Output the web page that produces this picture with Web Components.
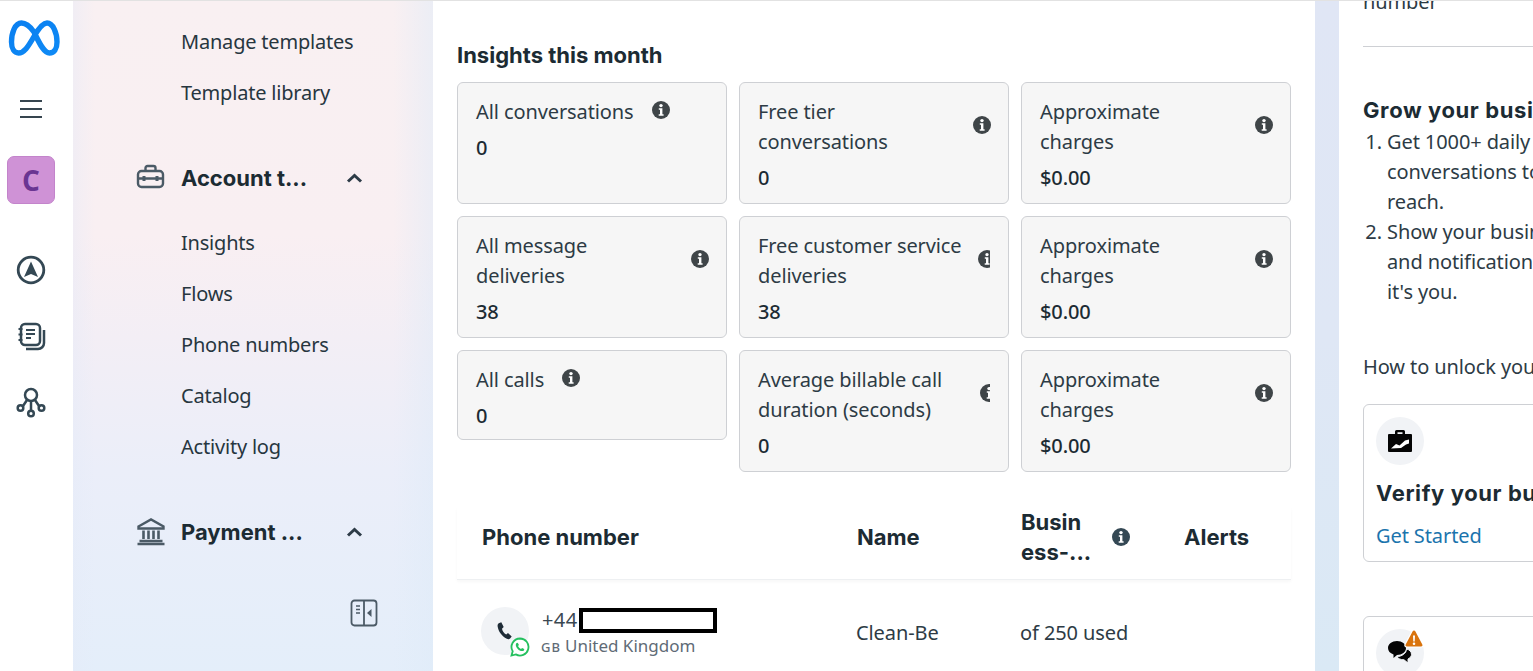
<!DOCTYPE html>
<html lang="en">
<head>
<meta charset="utf-8">
<title>WhatsApp Manager</title>
<style>
  html, body { margin: 0; height: 671px; overflow: hidden; background: #fff; }
  body { font-family: "Noto Sans", "Liberation Sans", sans-serif; color: #1c2b33; letter-spacing: -.1px; }
</style>
</head>
<body>
<app-shell>
  <left-rail slot="rail"></left-rail>
  <side-nav slot="nav"></side-nav>
  <main-panel slot="main"></main-panel>
  <right-panel slot="side"></right-panel>
</app-shell>

<script>
// small helper so each component just declares its css + markup
function shadow(el, css, html) {
  el.attachShadow({ mode: 'open' }).innerHTML = `<style>${css}</style>${html}`;
}

const HEAD_FONT = 'Inter, "Noto Sans", sans-serif';
const ICONS = {
  toolbox: '<rect x="2" y="8" width="25" height="16" rx="3.500"/><path d="M9.500 8V5A2 2 0 0 1 11.500 3h6a2 2 0 0 1 2 2V8M2 15.500h25"/><path d="M8 13v5M21 13v5" stroke-width="3"/>',
  bank: '<path d="M2.500 9.500 15 2.500l12.500 7v2h-25z"/><path d="M3.500 24h23M1.500 27h27M7.500 13.500v8.500M12.500 13.500v8.500M17.500 13.500v8.500M22.500 13.500v8.500" stroke-width="2.600"/>',
  chevron: '<path d="M2 9.500 8.500 3.500 15 9.500" fill="none" stroke="#2d3b47" stroke-width="3"/>'
};

class AppShell extends HTMLElement {
  constructor() {
    super();
    shadow(this, `
      :host { display: flex; height: 671px; box-sizing: border-box; border-top: 1px solid #e2e2e2; overflow: hidden;
        background:
          linear-gradient(180deg, #e0e6f5 0%, #dfe7f5 50%, #dae9f5 100%) right top / 218px 100% no-repeat,
          linear-gradient(180deg, #f9f0f2 0%, #f9eff2 35%, #f3eef5 50%, #ebeef9 70%, #e4eefa 100%); }
      ::slotted([slot=rail]) { flex: 0 0 73px; }
      ::slotted([slot=nav]) { flex: 0 0 360px; }
      ::slotted([slot=main]) { flex: 0 0 882px; }
      ::slotted([slot=side]) { flex: 0 0 194px; margin-left: 24px; }
    `, `<slot name="rail"></slot><slot name="nav"></slot><slot name="main"></slot><slot name="side"></slot>`);
  }
}

class LeftRail extends HTMLElement {
  constructor() {
    super();
    shadow(this, `
      :host { display: flex; flex-direction: column; background: #fff; padding: 19px 0 0 7px; box-sizing: border-box; }
      .logo { width: 52px; height: 36px; margin-left: 1px; }
      .burger { width: 24px; height: 20px; margin: 43px 0 0 12px; }
      .avatar { width: 48px; height: 48px; margin-top: 37px; box-sizing: border-box; border-radius: 7px; background: #cf92d6; border: 1px solid #c384cb;
        display: flex; align-items: center; justify-content: center; color: #6a3592; font: 700 28px "Open Sans", sans-serif; letter-spacing: 0; }
      .tools { display: flex; flex-direction: column; gap: 30px; margin-top: 48px; }
      .tools svg { display: block; width: 36px; height: 36px; margin-left: 6px; fill: none; stroke: #344854; stroke-width: 2.500; }
    `, `
      <svg class="logo" viewBox="0 0 52 36">
        <defs><linearGradient id="m" x1="0" y1="0" x2="1" y2="1"><stop offset="0" stop-color="#0a7ff0"/><stop offset="1" stop-color="#0f8af5"/></linearGradient></defs>
        <path d="M26 12C21 5 17 3 13.500 3 7 3 3.500 13 3.500 22 3.500 29 6.500 33 10.500 33 16 33 20 27 26 16.500 32 6 35.500 3 39 3 45 3 49 13 49 22 49 29 46 33 41.500 33 36.500 33 32.500 26 26 12Z" fill="none" stroke="url(#m)" stroke-width="5.400"/>
      </svg>
      <svg class="burger" viewBox="0 0 24 20"><path d="M1 2h22M1 10h22M1 18h22" stroke="#36454f" stroke-width="2.200"/></svg>
      <div class="avatar">C</div>
      <div class="tools">
        <svg viewBox="0 0 36 36"><circle cx="18" cy="18" r="12.800" stroke-width="2.800"/><path d="M18 9.500 25 25 18 22 11 25Z" fill="#344854" stroke="none"/></svg>
        <svg viewBox="0 0 36 36"><rect x="8" y="6" width="19" height="21" rx="4"/><path d="M31 12v13a6 6 0 0 1-6 6H13"/><path d="M13 12h9M13 16h9M13 20h5" stroke-width="2"/><path d="M5.500 11h4M5.500 16.500h4M5.500 22h4" stroke-width="1.900"/></svg>
        <svg viewBox="0 0 36 36"><circle cx="18" cy="11" r="6"/><circle cx="7.500" cy="24" r="2.800"/><circle cx="18" cy="29.500" r="2.800"/><circle cx="28.500" cy="24" r="2.800"/><path d="M18 17v9.500M14 16 10 22M22 16l4 6"/></svg>
      </div>
    `);
  }
}

class NavSection extends HTMLElement {
  constructor() {
    super();
    const icon = ICONS[this.getAttribute('icon')];
    shadow(this, `
      :host { display: block; margin-top: 34px; }
      .head { display: flex; align-items: center; height: 51px; padding-left: 63px; }
      .ic { width: 30px; height: 30px; flex: none; fill: none; stroke: #4b5a66; stroke-width: 2.400; }
      .label { width: 130px; margin-left: 15px; font: 700 22px ${HEAD_FONT}; letter-spacing: 0; white-space: nowrap; color: #1c2b33; }
      .chev { width: 17px; height: 12px; margin-left: 35px; }
      .items { margin-top: 14px; }
    `, `
      <div class="head">
        <svg class="ic" viewBox="0 0 30 30">${icon}</svg>
        <span class="label">${this.getAttribute('label')}</span>
        <svg class="chev" viewBox="0 0 17 12">${ICONS.chevron}</svg>
      </div>
      <div class="items"><slot></slot></div>
    `);
  }
}

class NavItem extends HTMLElement {
  constructor() {
    super();
    shadow(this, `
      :host { display: flex; align-items: center; height: 51px; padding-left: 108px; font-size: 20px; letter-spacing: -.2px; color: #27363f; }
    `, `<slot></slot>`);
  }
}

class SideNav extends HTMLElement {
  constructor() {
    super();
    shadow(this, `
      :host { display: flex; flex-direction: column; box-sizing: border-box; height: 670px; padding-top: 15px;
        background: linear-gradient(90deg, rgba(228,234,248,.4), rgba(228,234,248,0) 22px, rgba(222,235,248,0) 320px, rgba(222,235,248,.5)); }
      .collapse { width: 28px; height: 28px; margin: 28px 0 0 277px; fill: none; stroke: #4b5a66; stroke-width: 1.800; }
    `, `
      <nav-item>Manage templates</nav-item>
      <nav-item>Template library</nav-item>
      <nav-section icon="toolbox" label="Account t...">
        <nav-item>Insights</nav-item>
        <nav-item>Flows</nav-item>
        <nav-item>Phone numbers</nav-item>
        <nav-item>Catalog</nav-item>
        <nav-item>Activity log</nav-item>
      </nav-section>
      <nav-section icon="bank" label="Payment ..."></nav-section>
      <svg class="collapse" viewBox="0 0 28 28">
        <rect x="1.500" y="1.500" width="25" height="25" rx="3"/><path d="M14 1.500v25"/><path d="M6 7h4M6 10.500h4M6 14h4" stroke-width="1.500"/><path d="M21.500 10v8l-4.500-4z" fill="#4b5a66" stroke="none"/>
      </svg>
    `);
  }
}

class InfoIcon extends HTMLElement {
  constructor() {
    super();
    const clip = this.getAttribute('clip');
    shadow(this, `
      :host { display: block; flex: none; width: ${clip ? clip + 'px' : '18px'}; height: 18px; overflow: hidden; }
      svg { display: block; width: 18px; height: 18px; }
    `, `<svg viewBox="0 0 18 18"><circle cx="9" cy="9" r="9" fill="${this.getAttribute('color') || '#3f4548'}"/><circle cx="9" cy="4.600" r="1.700" fill="#fff"/><path d="M6.800 7.300h3.600v6h1.200v1.500H6.700v-1.500h1.300V8.800H6.800z" fill="#fff"/></svg>`);
  }
}

class InsightCard extends HTMLElement {
  constructor() {
    super();
    const clip = this.getAttribute('clip');
    const info = clip ? `<info-icon clip="${clip}"></info-icon>` : '<info-icon></info-icon>';
    shadow(this, `
      :host { display: block; box-sizing: border-box; border: 1px solid #ced0d4; border-radius: 6px; background: #f6f6f6; padding: 14px 17px 8px 18px; color: #2d3b45; font-size: 20px; line-height: 30px; }
      :host([tall]) { align-self: stretch; }
      :host([clip]) { padding-right: 18px; }
      .top { display: flex; align-items: center; gap: 18px; justify-content: space-between; }
      :host([short]) .top { justify-content: flex-start; }
      :host([clip]) .top { gap: 12px; }
      .top info-icon { margin-bottom: 4px; }
      .value { margin-top: 6px; font-weight: 500; color: #1c2b33; }
    `, `<div class="top"><div class="label"><slot></slot></div>${info}</div><div class="value">${this.getAttribute('value')}</div>`);
  }
}

class PhoneTable extends HTMLElement {
  constructor() {
    super();
    shadow(this, `
      :host { display: block; margin-top: 35px; }
      .row { display: grid; grid-template-columns: 375px 164px 163px 1fr; padding-left: 24px; }
      .head { align-items: center; padding-bottom: 12px; border-bottom: 1px solid #eef0f2; box-shadow: 0 2px 3px rgba(0,0,0,.03);
        font: 700 22px/30px ${HEAD_FONT}; letter-spacing: 0; color: #1c2b33; }
      .head > div { padding-left: 1px; }
      .biz { display: flex; align-items: center; gap: 16px; }
      .biz span { width: 75px; }
      .body { align-items: center; padding-top: 27px; font-size: 20px; color: #2d3b45; }
      .body > .cell { margin-bottom: 2px; }
      .phone { display: flex; gap: 13px; }
      .avatar { position: relative; width: 48px; height: 48px; border-radius: 50%; background: #f1f3f6; display: flex; align-items: center; justify-content: center; }
      .avatar svg.call { width: 20px; height: 20px; fill: #1f2c37; }
      .wa { position: absolute; right: -1px; bottom: -2px; width: 20px; height: 20px; }
      .num { display: flex; align-items: center; height: 26px; line-height: 26px; color: #3b4852; letter-spacing: .4px; }
      .redact { display: inline-block; box-sizing: border-box; width: 138px; height: 25px; margin-left: 1px; border: 4px solid #000; background: #fff; }
      .region { font-size: 17px; line-height: 26px; color: #5f6b76; white-space: nowrap; letter-spacing: 0; }
      .region small { font-size: 13px; font-weight: 500; letter-spacing: 1px; margin-right: 4px; margin-left: -1px; }
    `, `
      <div class="row head">
        <div>Phone number</div>
        <div>Name</div>
        <div class="biz"><span>Busin ess-...</span><info-icon color="#344854"></info-icon></div>
        <div>Alerts</div>
      </div>
      <div class="row body">
        <div class="phone">
          <div class="avatar">
            <svg class="call" viewBox="0 0 20 20"><path d="M3.700 2.200 6.300 1.300 8.700 6 7 7.800c.4 2.300 2 4.700 4.200 5.600l1.800-1.400 3.700 3.500-1.600 2.100c-.9.800-2.200.8-3.300.2C6.800 15.300 3.500 10.700 2.600 5.300 2.400 4 2.800 2.900 3.700 2.200Z"/></svg>
            <svg class="wa" viewBox="0 0 20 20"><path d="M10 1.500a8.500 8.500 0 0 0-7.300 12.800L1.500 18.500l4.300-1.100A8.500 8.500 0 1 0 10 1.500Z" fill="#fff" stroke="#25c05f" stroke-width="1.800"/><path d="M7.200 5.800c-.5 0-1.400.8-1.400 2.200 0 2.700 3.300 6.100 6.200 6.100 1.400 0 2.300-.9 2.300-1.700 0-.5-1.800-1.400-2.200-1.400-.4 0-.7.900-1.100.9-.8 0-2.900-2-2.900-2.800 0-.4.800-.7.800-1.100 0-.5-1-2.200-1.700-2.200Z" fill="#25c05f"/></svg>
          </div>
          <div>
            <div class="num">+44<span class="redact"></span></div>
            <div class="region"><small>GB</small>United Kingdom</div>
          </div>
        </div>
        <div class="cell">Clean-Be</div>
        <div class="cell">of 250 used</div>
        <div></div>
      </div>
    `);
  }
}

class MainPanel extends HTMLElement {
  constructor() {
    super();
    shadow(this, `
      :host { display: block; box-sizing: border-box; height: 670px; background: #fff; padding: 39px 24px 0; overflow: hidden; }
      h2 { margin: 0 0 12px; font: 700 22px/30px ${HEAD_FONT}; letter-spacing: 0; color: #1c2b33; }
      .grid { display: grid; grid-template-columns: repeat(3, 270px); gap: 12px; align-items: start; }
      insight-card { min-height: 90px; }
      insight-card[tall] { min-height: 122px; }
    `, `
      <h2>Insights this month</h2>
      <div class="grid">
        <insight-card short tall value="0">All conversations</insight-card>
        <insight-card tall value="0">Free tier conversations</insight-card>
        <insight-card tall value="$0.00">Approximate charges</insight-card>
        <insight-card tall value="38">All message deliveries</insight-card>
        <insight-card tall clip="12" value="38">Free customer service deliveries</insight-card>
        <insight-card tall value="$0.00">Approximate charges</insight-card>
        <insight-card short value="0">All calls</insight-card>
        <insight-card tall clip="10" value="0">Average billable call duration (seconds)</insight-card>
        <insight-card tall value="$0.00">Approximate charges</insight-card>
      </div>
      <phone-table></phone-table>
    `);
  }
}

class TaskCard extends HTMLElement {
  constructor() {
    super();
    shadow(this, `
      :host { display: block; width: 330px; box-sizing: border-box; border: 1px solid #ced0d4; border-radius: 6px; padding: 12px 12px 10px; background: #fff; }
      .circle { position: relative; width: 48px; height: 48px; border-radius: 50%; background: #f1f3f6; display: flex; align-items: center; justify-content: center; }
      ::slotted([slot=icon]) { width: 26px; height: 26px; }
      .title { margin-top: 12px; font: 700 22px/32px ${HEAD_FONT}; letter-spacing: .6px; color: #1c2b33; white-space: nowrap; }
      .link { margin-top: 12px; font-size: 20px; line-height: 30px; color: #1b74ad; }
    `, `
      <div class="circle"><slot name="icon"></slot><slot name="badge"></slot></div>
      <div class="title">${this.getAttribute('heading') || ''}</div>
      <div class="link">${this.getAttribute('link') || ''}</div>
    `);
  }
}

class RightPanel extends HTMLElement {
  constructor() {
    super();
    shadow(this, `
      :host { display: block; box-sizing: border-box; height: 670px; background: #fff; padding-left: 24px; overflow: hidden; font-size: 20px; line-height: 30px; color: #2d3b45; }
      .clip { margin-top: -14px; white-space: nowrap; }
      hr { margin: 29px 0 0; border: 0; border-top: 1px solid #ced0d4; }
      h3 { margin: 47px 0 0; font: 700 22px/33px ${HEAD_FONT}; letter-spacing: .6px; color: #1c2b33; white-space: nowrap; }
      ol { margin: 0; padding: 0 0 0 24px; width: 300px; white-space: nowrap; }
      .how { margin: 45px 0 22px; white-space: nowrap; }
      task-card + task-card { margin-top: 54px; }
    `, `
      <div class="clip">number</div>
      <hr>
      <h3>Grow your business</h3>
      <ol>
        <li>Get 1000+ daily<br>conversations to<br>reach.</li>
        <li>Show your business<br>and notifications<br>it's you.</li>
      </ol>
      <div class="how">How to unlock your</div>
      <task-card heading="Verify your business" link="Get Started">
        <svg slot="icon" viewBox="0 0 26 26"><path d="M8 6V3.500A1.500 1.500 0 0 1 9.500 2h7A1.500 1.500 0 0 1 18 3.500V6h6a1 1 0 0 1 1 1v16a1 1 0 0 1-1 1H2a1 1 0 0 1-1-1V7a1 1 0 0 1 1-1Zm2.500 0h5V4.200h-5Z" fill="#050505" fill-rule="evenodd"/><path d="M4 20.500l5-4.500 3.500 1.500 5.500-5 4-1v4l-3 1-5 3.500Z" fill="#fff"/></svg>
      </task-card>
      <task-card>
        <svg slot="icon" viewBox="0 0 26 26"><path d="M19.500 9c3 .7 5 2.800 5 5.300 0 2-1.300 3.700-3.500 4.700v4l-4-3.200c-3.200 0-5.800-1.100-7.200-3.100 5-.2 9.700-3.400 9.700-7.700Z" fill="#050505" stroke="#f1f3f6" stroke-width="1"/><path d="M10 1c5 0 9 3 9 7s-4 7-9 7l-3.500 3v-3.600C3 13.300 1 11 1 8c0-4 4-7 9-7Z" fill="#050505"/></svg>
        <svg slot="badge" style="position:absolute;right:0;top:0;width:20px;height:20px" viewBox="0 0 20 20"><path d="M10 0c.9 0 1.500.4 2 1.200l7.500 14c.8 1.600-.2 3.300-2 3.300H2.500c-1.800 0-2.800-1.700-2-3.300L8 1.200C8.500.4 9.100 0 10 0Z" fill="#fff"/><path d="M10 1.500c.6 0 1 .3 1.300.8l7 13.200c.5 1-.1 2-1.200 2H2.900c-1.100 0-1.700-1-1.200-2l7-13.200c.3-.5.7-.8 1.300-.8Z" fill="#d9730d"/><path d="M9 6.500h2l-.3 6H9.300Z M10 13.500a1.300 1.300 0 1 1 0 2.600 1.300 1.300 0 0 1 0-2.600Z" fill="#fff"/></svg>
      </task-card>
    `);
  }
}

customElements.define('info-icon', InfoIcon);
customElements.define('nav-item', NavItem);
customElements.define('nav-section', NavSection);
customElements.define('left-rail', LeftRail);
customElements.define('side-nav', SideNav);
customElements.define('insight-card', InsightCard);
customElements.define('phone-table', PhoneTable);
customElements.define('main-panel', MainPanel);
customElements.define('task-card', TaskCard);
customElements.define('right-panel', RightPanel);
customElements.define('app-shell', AppShell);
</script>
</body>
</html>
